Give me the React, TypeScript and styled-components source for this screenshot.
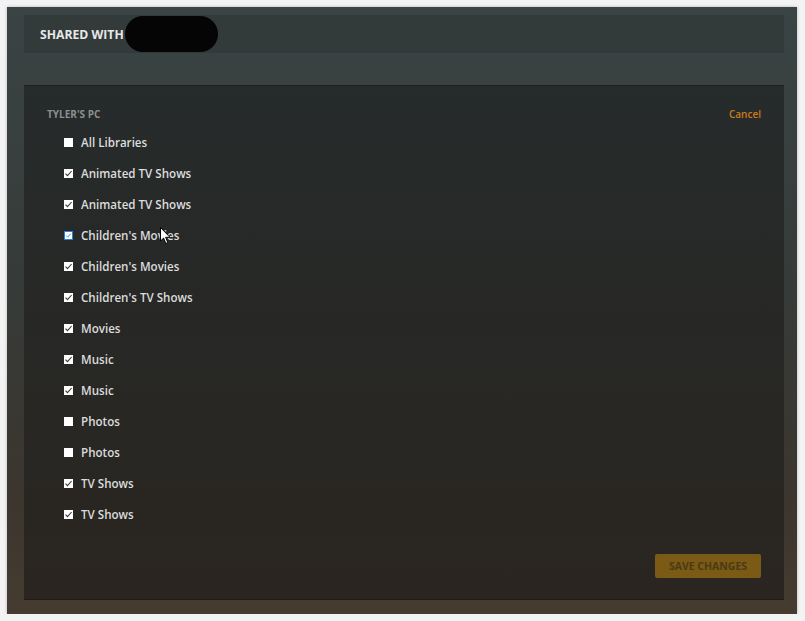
import styled, { createGlobalStyle } from 'styled-components';

const GlobalStyle = createGlobalStyle`
  html, body {
    margin: 0;
    padding: 0;
    background: #f3f3f3;
  }
  body {
    font-family: "Open Sans", "Liberation Sans", sans-serif;
  }
`;

interface Library {
  name: string;
  checked: boolean;
  focused?: boolean;
}

const libraries: Library[] = [
  { name: 'All Libraries', checked: false },
  { name: 'Animated TV Shows', checked: true },
  { name: 'Animated TV Shows', checked: true },
  { name: "Children's Movies", checked: true, focused: true },
  { name: "Children's Movies", checked: true },
  { name: "Children's TV Shows", checked: true },
  { name: 'Movies', checked: true },
  { name: 'Music', checked: true },
  { name: 'Music', checked: true },
  { name: 'Photos', checked: false },
  { name: 'Photos', checked: false },
  { name: 'TV Shows', checked: true },
  { name: 'TV Shows', checked: true },
];

const Check = ({ checked, focused }: { checked: boolean; focused?: boolean }) => (
  <Box $focused={focused}>
    {checked && (
      <svg width="9" height="9" viewBox="0 0 9 9">
        <path
          d="M1.5 4.6 L3.5 6.6 L7.6 2"
          fill="none"
          stroke={focused ? '#2a7fd8' : '#3a3a3a'}
          strokeWidth="1.1"
        />
      </svg>
    )}
  </Box>
);

const App = () => {
  return (
    <>
      <GlobalStyle />
      <Frame>
        <Header>
          <HeaderTitle>Shared With</HeaderTitle>
          <Redacted />
        </Header>
        <Panel>
          <PanelTop>
            <ServerName>Tyler's PC</ServerName>
            <CancelLink>Cancel</CancelLink>
          </PanelTop>
          <List>
            {libraries.map((lib, i) => (
              <Row key={i}>
                <Check checked={lib.checked} focused={lib.focused} />
                <Label>{lib.name}</Label>
                {lib.focused && (
                  <Cursor width="12" height="18" viewBox="0 0 12 18">
                    <path
                      d="M0.5 0.5 L0.5 14 L3.6 11 L5.8 16.5 L7.8 15.6 L5.6 10.3 L10 10.3 Z"
                      fill="#fff"
                      stroke="#000"
                      strokeWidth="1"
                    />
                  </Cursor>
                )}
              </Row>
            ))}
          </List>
          <Footer>
            <SaveButton>Save Changes</SaveButton>
          </Footer>
        </Panel>
      </Frame>
    </>
  );
};

export default App;

const Frame = styled.div`
  margin: 7px 0 0 7px;
  width: 790px;
  height: 607px;
  box-sizing: border-box;
  padding: 8px 13px 14px 17px;
  display: flex;
  flex-direction: column;
  gap: 32px;
  background: linear-gradient(180deg, #3a4444 0%, #363b39 45%, #3c362f 80%, #453b30 100%);
  box-shadow: 0 0 3px rgba(0, 0, 0, 0.25);
`;

const Header = styled.div`
  height: 38px;
  flex-shrink: 0;
  display: flex;
  align-items: center;
  padding-left: 16px;
  background: #323a3a;
`;

const HeaderTitle = styled.h1`
  margin: 0;
  font-size: 12.2px;
  font-weight: 700;
  text-transform: uppercase;
  color: #e8e8e8;
`;

const Redacted = styled.div`
  width: 93px;
  height: 36px;
  margin-left: 1px;
  border-radius: 18px;
  background: #050505;
`;

const Panel = styled.div`
  flex: 1;
  display: flex;
  flex-direction: column;
  padding: 21px 23px 21px 23px;
  background: linear-gradient(180deg, #262b2b 0%, #272826 45%, #2a2520 100%);
  border-top: 1px solid #1c2020;
  border-bottom: 1px solid #1d1a17;
`;

const PanelTop = styled.div`
  display: flex;
  justify-content: space-between;
  align-items: center;
  height: 14px;
`;

const ServerName = styled.div`
  font-size: 10px;
  font-weight: 700;
  text-transform: uppercase;
  color: #8c8f8f;
`;

const CancelLink = styled.a`
  font-size: 10px;
  font-weight: 600;
  color: #cc7b1a;
  cursor: pointer;
`;

const List = styled.div`
  display: flex;
  flex-direction: column;
  margin-top: 6px;
  padding-left: 17px;
`;

const Row = styled.div`
  position: relative;
  display: flex;
  align-items: center;
  height: 31px;
  gap: 8px;
`;

const Box = styled.span<{ $focused?: boolean }>`
  width: 9px;
  height: 9px;
  box-sizing: border-box;
  background: #fff;
  border: ${({ $focused }) => ($focused ? '1px solid #2a7fd8' : 'none')};
  display: flex;
  align-items: center;
  justify-content: center;
  svg {
    display: block;
  }
`;

const Label = styled.span`
  font-size: 11.6px;
  font-weight: 600;
  color: #dcdcdc;
`;

const Cursor = styled.svg`
  position: absolute;
  left: 96px;
  top: 7px;
`;

const Footer = styled.div`
  margin-top: auto;
  display: flex;
  justify-content: flex-end;
`;

const SaveButton = styled.button`
  width: 106px;
  height: 24px;
  border: none;
  border-radius: 2px;
  background: #7a5a14;
  color: #4b3a14;
  font-family: "Open Sans", "Liberation Sans", sans-serif;
  font-size: 10.5px;
  font-weight: 700;
  text-transform: uppercase;
  padding: 0;
`;
